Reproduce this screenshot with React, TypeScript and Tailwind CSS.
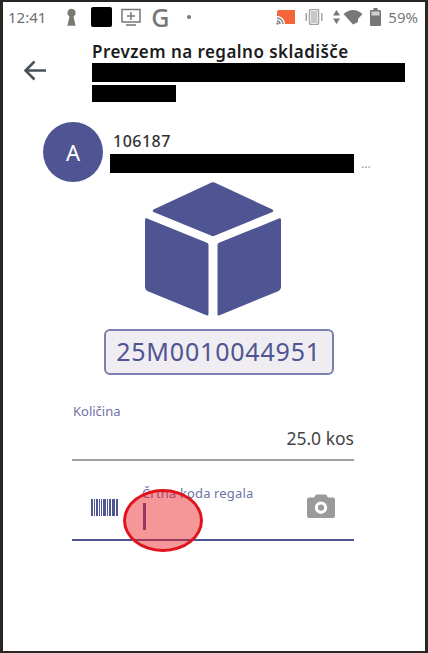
const font = { fontFamily: '"Noto Sans", "Open Sans", sans-serif' };

function Cube() {
  return (
    <svg width="136" height="134" viewBox="0 0 136 134" fill="#4f5592">
      <path d="M66.500 0.500 Q68 -0.200 69.500 0.500 L127.500 27.500 Q129 29 127.500 30 L69.500 53.800 Q68 54.300 66.500 53.800 L8.500 30 Q7 29 8.500 27.500 Z" />
      <path d="M0 37.500 Q0 35.800 1.500 36.300 L62 60.800 Q63.500 61.500 63.500 63 L63.500 132 Q63.500 134 62 133.400 L3.500 109.500 Q0 108 0 104.500 Z" />
      <path d="M136 37.500 Q136 35.800 134.500 36.300 L74 60.800 Q72.500 61.500 72.500 63 L72.500 132 Q72.500 134 74 133.400 L132.500 109.500 Q136 108 136 104.500 Z" />
    </svg>
  );
}

function Barcode() {
  const bars = [
    [0, 2], [3, 1], [5, 2], [8, 1], [10, 1], [12, 3], [16, 1], [18, 2], [21, 3], [25, 2],
  ];
  return (
    <svg width="27" height="17" viewBox="0 0 27 17" fill="#4f5592">
      {bars.map(([x, w]) => (
        <rect key={x} x={x} y="0" width={w} height="17" />
      ))}
    </svg>
  );
}

function Camera() {
  return (
    <svg width="28" height="24" viewBox="0 0 28 24">
      <path
        fillRule="evenodd"
        fill="#9a9a9a"
        d="M9 0.500 H19 L21 3.500 H26 Q28 3.500 28 5.500 V22 Q28 24 26 24 H2 Q0 24 0 22 V5.500 Q0 3.500 2 3.500 H7 Z M14 7.500 A6.200 6.200 0 1 0 14 19.900 A6.200 6.200 0 1 0 14 7.500 Z M14 10.600 A3.100 3.100 0 1 1 14 16.800 A3.100 3.100 0 1 1 14 10.600 Z"
      />
    </svg>
  );
}

function StatusBar() {
  return (
    <div className="flex h-[30px] items-center justify-between pl-[5px] pr-[7px] text-[15px] text-[#6f6f6f]">
      <div className="flex items-center">
        <span>12:41</span>
        <svg className="ml-[20px]" width="11" height="19" viewBox="0 0 12 20" fill="#7a7a72">
          <circle cx="6" cy="5" r="4.500" />
          <path d="M4 8 H8 L10.500 19 H1.500 Z" />
        </svg>
        <div className="ml-[14px] h-[20px] w-[21px] rounded-[2px] bg-black" />
        <svg className="ml-[9px]" width="20" height="19" viewBox="0 0 20 19" fill="none" stroke="#777" strokeWidth="1.500">
          <rect x="1" y="1.500" width="18" height="12.500" />
          <path d="M10 4 V12 M6 8 H14 M5 17 H15" />
        </svg>
        <span className="ml-[10px] text-[25px] leading-none font-medium text-[#777]">G</span>
        <div className="ml-[17px] h-[4px] w-[4px] rounded-full bg-[#777]" />
      </div>
      <div className="flex items-center">
        <svg width="20" height="17" viewBox="0 0 20 17">
          <path d="M5 1 H19 V15 H9 A8 8 0 0 0 1 7 V3 Q1 1 3 1 Z" fill="#f4663a" />
          <path d="M1 9 A6 6 0 0 1 7 15 M1 12 A3 3 0 0 1 4 15" stroke="#888" strokeWidth="1.500" fill="none" />
          <circle cx="1.500" cy="14.500" r="1.200" fill="#888" />
        </svg>
        <svg className="ml-[8px]" width="20" height="16" viewBox="0 0 20 16" fill="#a3a3a3">
          <rect x="5.500" y="0.500" width="9" height="15" rx="1.500" fill="none" stroke="#a3a3a3" strokeWidth="1.500" />
          <rect x="7" y="2" width="6" height="12" fill="#c8c8c8" />
          <rect x="1.500" y="4" width="1.500" height="8" />
          <rect x="17" y="4" width="1.500" height="8" />
        </svg>
        <svg className="ml-[8px]" width="9" height="16" viewBox="0 0 9 16" fill="#777">
          <path d="M4.500 1 L8 6.500 H1 Z M4.500 15 L8 9.500 H1 Z" />
        </svg>
        <svg className="ml-[2px]" width="20" height="16" viewBox="0 0 20 16" fill="#777">
          <path d="M0.500 5 Q10 -3 19.500 5 L15 10 V13 L10 15.500 Z" />
        </svg>
        <svg className="ml-[7px]" width="11" height="18" viewBox="0 0 11 18" fill="#777">
          <rect x="3.500" y="0" width="4" height="2" />
          <rect x="0" y="2" width="11" height="16" rx="1" />
          <rect x="1.500" y="3.500" width="8" height="4" fill="#d0d0d0" />
        </svg>
        <span className="ml-[7px] text-[#777]">59%</span>
      </div>
    </div>
  );
}

export default function App() {
  return (
    <div
      className="relative h-[653px] w-[428px] overflow-hidden border-x-[3px] border-t-[2px] border-b-[2px] border-x-[#2a2622] border-t-[#23262b] border-b-[#2a2622] bg-white"
      style={font}
    >
      <StatusBar />

      <div className="flex pt-[9px]">
        <svg className="ml-[20px] mt-[19px] shrink-0" width="24" height="21" viewBox="0 0 24 21" fill="none" stroke="#4a5058" strokeWidth="2.500">
          <path d="M23 10.500 H2.500 M11.500 1.500 L2.500 10.500 L11.500 19.500" />
        </svg>
        <div className="ml-[45px] flex-1">
          <div className="text-[17px] leading-[22px] font-semibold tracking-[0.45px] text-[#1c1c1c]">
            Prevzem na regalno skladišče
          </div>
          <div className="h-[19px] w-[313px] bg-black" />
          <div className="mt-[3px] h-[17px] w-[84px] bg-black" />
        </div>
      </div>

      <div className="mt-[20px] flex">
        <div className="ml-[40px] flex h-[60px] w-[60px] shrink-0 items-center justify-center rounded-full bg-[#4f5592] text-[22px] text-white">
          A
        </div>
        <div className="ml-[7px] pt-[9px]">
          <div className="ml-[3px] text-[16px] leading-[20px] font-medium tracking-[0.5px] text-[#333]">106187</div>
          <div className="mt-[3px] flex items-center">
            <div className="h-[19px] w-[244px] bg-black" />
            <span className="ml-[7px] text-[12px] leading-none text-[#999]">...</span>
          </div>
        </div>
      </div>

      <div className="flex flex-col items-center pr-[2px]">
        <Cube />
        <div className="ml-[11px] mt-[13px] flex h-[46px] w-[230px] items-center justify-center rounded-[6px] border-2 border-[#7c80b0] bg-[#f0edf2] text-[25px] tracking-[0.8px] text-[#4f5592]">
          25M0010044951
        </div>
      </div>

      <div className="ml-[69px] mr-[71px] mt-[28px]">
        <div className="ml-[1px] text-[13px] leading-[16px] text-[#6f74a8]">Količina</div>
        <div className="mt-[7px] border-b-2 border-[#a0a0a0] pb-[9px] text-right text-[17.500px] leading-[24px] text-[#444]">
          25.0 kos
        </div>

        <div className="mt-[24px] flex h-[56px] items-start border-b-2 border-[#4f5592]">
          <div className="ml-[19px] mt-[14px]">
            <Barcode />
          </div>
          <div className="ml-[24px] flex-1">
            <div className="text-[13px] leading-[16px] tracking-[0.15px] text-[#6f74a8]">Črtna koda regala</div>
            <div className="mt-[2px] ml-[1px] h-[27px] w-[3px] bg-[#4f5592]" />
          </div>
          <div className="mr-[19px] mt-[9px]">
            <Camera />
          </div>
        </div>
      </div>

      <div className="absolute left-[120px] top-[487px] h-[63px] w-[80px] rounded-[50%] border-[3px] border-[#e0141c] bg-[#e8161c]/45" />
    </div>
  );
}
